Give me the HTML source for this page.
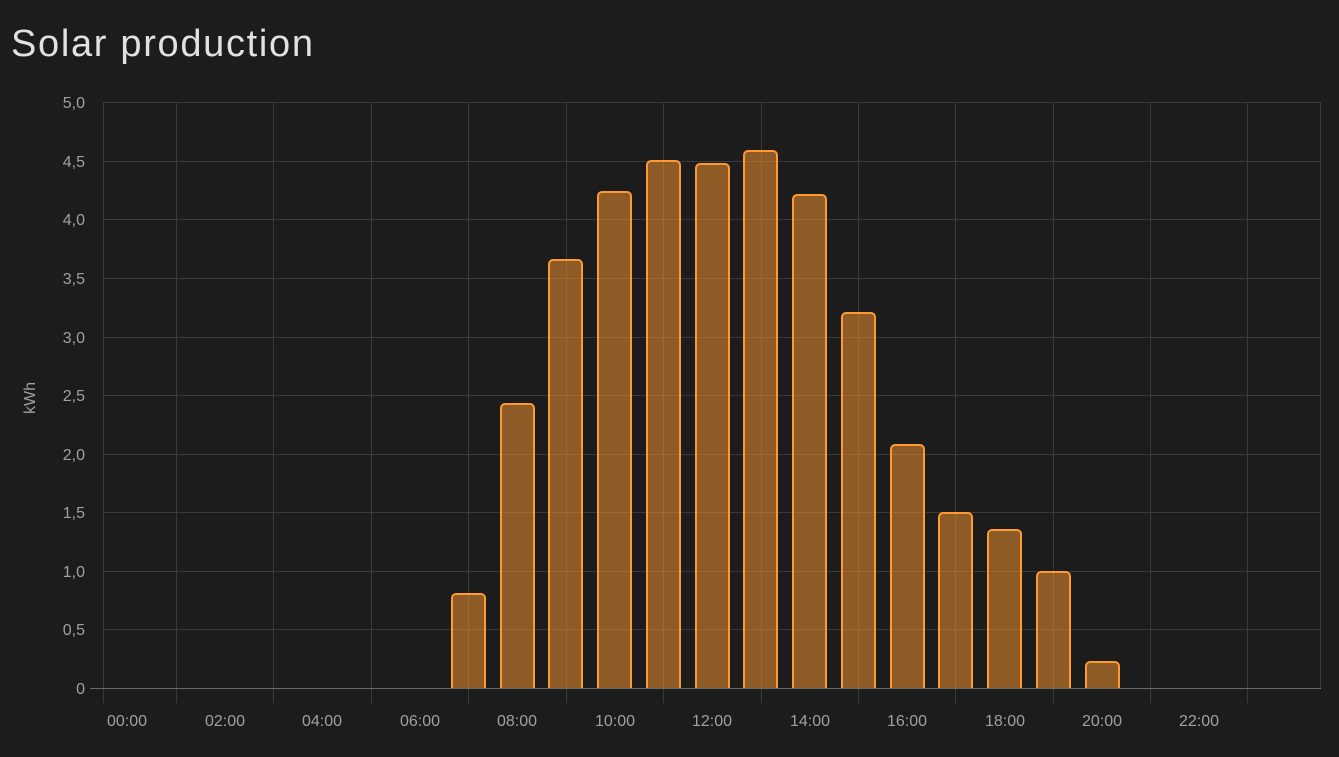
<!DOCTYPE html><html><head><style>body{margin:0;background:#1c1c1c;width:1339px;height:757px;overflow:hidden;font-family:"Liberation Sans",sans-serif}</style></head><body>
<svg width="1339" height="757" xmlns="http://www.w3.org/2000/svg" style="position:absolute;left:0;top:0">
<rect width="1339" height="757" fill="#1c1c1c"/>
<text x="11" y="56" font-size="38" textLength="302" fill="#e1e1e1" font-family="Liberation Sans,sans-serif">Solar production</text>
<g stroke="#3a3a3a" stroke-width="1">
<line x1="103" x2="1321" y1="102.5" y2="102.5"/><line x1="103" x2="1321" y1="161.5" y2="161.5"/><line x1="103" x2="1321" y1="219.5" y2="219.5"/><line x1="103" x2="1321" y1="278.5" y2="278.5"/><line x1="103" x2="1321" y1="337.5" y2="337.5"/><line x1="103" x2="1321" y1="395.5" y2="395.5"/><line x1="103" x2="1321" y1="454.5" y2="454.5"/><line x1="103" x2="1321" y1="512.5" y2="512.5"/><line x1="103" x2="1321" y1="571.5" y2="571.5"/><line x1="103" x2="1321" y1="629.5" y2="629.5"/>
<line x1="103.5" x2="103.5" y1="102" y2="703"/><line x1="176.5" x2="176.5" y1="102" y2="703"/><line x1="273.5" x2="273.5" y1="102" y2="703"/><line x1="371.5" x2="371.5" y1="102" y2="703"/><line x1="468.5" x2="468.5" y1="102" y2="703"/><line x1="566.5" x2="566.5" y1="102" y2="703"/><line x1="663.5" x2="663.5" y1="102" y2="703"/><line x1="761.5" x2="761.5" y1="102" y2="703"/><line x1="858.5" x2="858.5" y1="102" y2="703"/><line x1="955.5" x2="955.5" y1="102" y2="703"/><line x1="1053.5" x2="1053.5" y1="102" y2="703"/><line x1="1150.5" x2="1150.5" y1="102" y2="703"/><line x1="1247.5" x2="1247.5" y1="102" y2="703"/><line x1="1320.5" x2="1320.5" y1="102" y2="688"/>
</g>
<line x1="90" x2="1321" y1="688.5" y2="688.5" stroke="#6a6a6a"/>
<g fill="rgba(255,152,48,0.5)" stroke="#ff9a30" stroke-width="2">
<path d="M452 688V598a4 4 0 0 1 4-4h25a4 4 0 0 1 4 4V688"/>
<path d="M501 688V408a4 4 0 0 1 4-4h25a4 4 0 0 1 4 4V688"/>
<path d="M549 688V264a4 4 0 0 1 4-4h25a4 4 0 0 1 4 4V688"/>
<path d="M598 688V196a4 4 0 0 1 4-4h25a4 4 0 0 1 4 4V688"/>
<path d="M647 688V165a4 4 0 0 1 4-4h25a4 4 0 0 1 4 4V688"/>
<path d="M696 688V168a4 4 0 0 1 4-4h25a4 4 0 0 1 4 4V688"/>
<path d="M744 688V155a4 4 0 0 1 4-4h25a4 4 0 0 1 4 4V688"/>
<path d="M793 688V199a4 4 0 0 1 4-4h25a4 4 0 0 1 4 4V688"/>
<path d="M842 688V317a4 4 0 0 1 4-4h25a4 4 0 0 1 4 4V688"/>
<path d="M891 688V449a4 4 0 0 1 4-4h25a4 4 0 0 1 4 4V688"/>
<path d="M939 688V517a4 4 0 0 1 4-4h25a4 4 0 0 1 4 4V688"/>
<path d="M988 688V534a4 4 0 0 1 4-4h25a4 4 0 0 1 4 4V688"/>
<path d="M1037 688V576a4 4 0 0 1 4-4h25a4 4 0 0 1 4 4V688"/>
<path d="M1086 688V666a4 4 0 0 1 4-4h25a4 4 0 0 1 4 4V688"/>
</g>
<g fill="#a0a0a0" font-size="16" font-family="Liberation Sans,sans-serif" text-anchor="end">
<text x="85" y="108">5,0</text><text x="85" y="167">4,5</text><text x="85" y="225">4,0</text><text x="85" y="284">3,5</text><text x="85" y="343">3,0</text><text x="85" y="401">2,5</text><text x="85" y="460">2,0</text><text x="85" y="518">1,5</text><text x="85" y="577">1,0</text><text x="85" y="635">0,5</text><text x="85" y="694">0</text>
</g>
<text transform="translate(35,398) rotate(-90)" text-anchor="middle" fill="#a0a0a0" font-size="16" font-family="Liberation Sans,sans-serif">kWh</text>
<g fill="#a0a0a0" font-size="16" font-family="Liberation Sans,sans-serif" text-anchor="middle">
<text x="127" y="726">00:00</text><text x="225" y="726">02:00</text><text x="322" y="726">04:00</text><text x="420" y="726">06:00</text><text x="517" y="726">08:00</text><text x="615" y="726">10:00</text><text x="712" y="726">12:00</text><text x="810" y="726">14:00</text><text x="907" y="726">16:00</text><text x="1005" y="726">18:00</text><text x="1102" y="726">20:00</text><text x="1199" y="726">22:00</text>
</g>
</svg></body></html>
